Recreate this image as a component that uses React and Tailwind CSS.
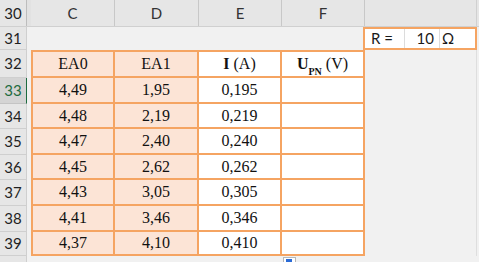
import React from "react";

const rows = [
  { n: 32, h: "h-[28px]", first: true },
  { n: 33, h: "h-[26px]", c: "4,49", d: "1,95", e: "0,195", sel: true },
  { n: 34, h: "h-[25px]", c: "4,48", d: "2,19", e: "0,219" },
  { n: 35, h: "h-[26px]", c: "4,47", d: "2,40", e: "0,240" },
  { n: 36, h: "h-[25px]", c: "4,45", d: "2,62", e: "0,262" },
  { n: 37, h: "h-[26px]", c: "4,43", d: "3,05", e: "0,305" },
  { n: 38, h: "h-[26px]", c: "4,41", d: "3,46", e: "0,346" },
  { n: 39, h: "h-[24px]", c: "4,37", d: "4,10", e: "0,410" },
];

const sans = { fontFamily: "Lato, 'Liberation Sans', sans-serif" };
const serif = { fontFamily: "'Liberation Serif', serif" };

function RowHead({ n, sel }) {
  return (
    <div
      className={`w-[27px] h-full shrink-0 flex items-center justify-center border-b border-r text-[15px] ${
        sel
          ? "bg-[#d4d4d4] text-[#1d6b3f] border-b-[#c4c4c4] border-r-[#1d6b3f]"
          : "bg-[#e6e6e6] text-[#1f1f1f] border-[#cfcfcf]"
      }`}
      style={sans}
    >
      {n}
    </div>
  );
}

export default function App() {
  return (
    <div className="relative w-[479px] h-[262px] overflow-hidden bg-[#f1f1f1]" style={sans}>
      {/* column header band */}
      <div className="flex h-[27px] bg-[#e6e6e6] border-b border-[#d0d0d0] text-[15px] text-[#333]">
        <div className="w-[27px] shrink-0 flex items-center justify-center border-r border-[#bdbdbd] text-[#1f1f1f]">30</div>
        <div className="w-[4px] shrink-0 bg-[#e2e2e2]" />
        <div className="w-[84px] shrink-0 flex items-center justify-center border-r border-[#c8c8c8]">C</div>
        <div className="w-[84px] shrink-0 flex items-center justify-center border-r border-[#c8c8c8]">D</div>
        <div className="w-[83px] shrink-0 flex items-center justify-center border-r border-[#c8c8c8]">E</div>
        <div className="w-[83px] shrink-0 flex items-center justify-center border-r border-[#c8c8c8]">F</div>
        <div className="w-[112px] shrink-0 border-r border-[#d0d0d0]" />
      </div>

      {/* row 31 */}
      <div className="flex h-[23px]">
        <RowHead n={31} />
        <div className="w-[4px] shrink-0" />
        <div className="w-[332px] shrink-0" />
        <div className="w-[114px] shrink-0 flex border-2 border-[#f5a462] bg-white text-[15px] text-[#1a1a1a]">
          <div className="w-[40px] flex items-center pl-[6px] border-r border-[#dcdcdc]">R =</div>
          <div className="w-[35px] flex items-center justify-end pr-[5px] border-r border-[#dcdcdc]">10</div>
          <div className="flex-1 flex items-center pl-[2px]">Ω</div>
        </div>
      </div>

      {/* table rows */}
      {rows.map((r) => (
        <div key={r.n} className={`flex ${r.h}`}>
          <RowHead n={r.n} sel={r.sel} />
          <div className="w-[4px] shrink-0" />
          <div className="flex text-[16px] text-[#111]" style={serif}>
            <div
              className={`w-[84px] shrink-0 flex items-center justify-center bg-[#fce4d6] border-l-2 border-r-2 border-b-2 border-[#f5a462] ${
                r.first ? "border-t-2" : ""
              }`}
            >
              {r.first ? "EA0" : r.c}
            </div>
            <div
              className={`w-[84px] shrink-0 flex items-center justify-center bg-[#fce4d6] border-r-2 border-b-2 border-[#f5a462] ${
                r.first ? "border-t-2" : ""
              }`}
            >
              {r.first ? "EA1" : r.d}
            </div>
            <div
              className={`w-[83px] shrink-0 flex items-center justify-center bg-white border-r-2 border-b-2 border-[#f5a462] ${
                r.first ? "border-t-2" : ""
              }`}
            >
              {r.first ? (
                <span>
                  <b>I</b> (A)
                </span>
              ) : (
                r.e
              )}
            </div>
            <div
              className={`w-[83px] shrink-0 flex items-center justify-center bg-white border-r-2 border-b-2 border-[#f5a462] ${
                r.first ? "border-t-2" : ""
              }`}
            >
              {r.first ? (
                <span>
                  <b>U</b>
                  <sub className="text-[10px] font-bold align-[-3px]">PN</sub> (V)
                </span>
              ) : null}
            </div>
          </div>
          <div className="w-[112px] shrink-0 border-r border-[#dedede]" />
        </div>
      ))}

      {/* bottom partial row */}
      <div className="flex h-[6px]">
        <div className="w-[27px] shrink-0 bg-[#e6e6e6] border-r border-[#cfcfcf]" />
      </div>

      {/* paste options handle */}
      <div className="absolute left-[283px] top-[257px] w-[13px] h-[8px] bg-white border border-[#b8b8b8] flex items-start pl-[2px] pt-[1px]">
        <div className="w-[6px] h-[6px] bg-[#2a6bd6]" />
      </div>
    </div>
  );
}
